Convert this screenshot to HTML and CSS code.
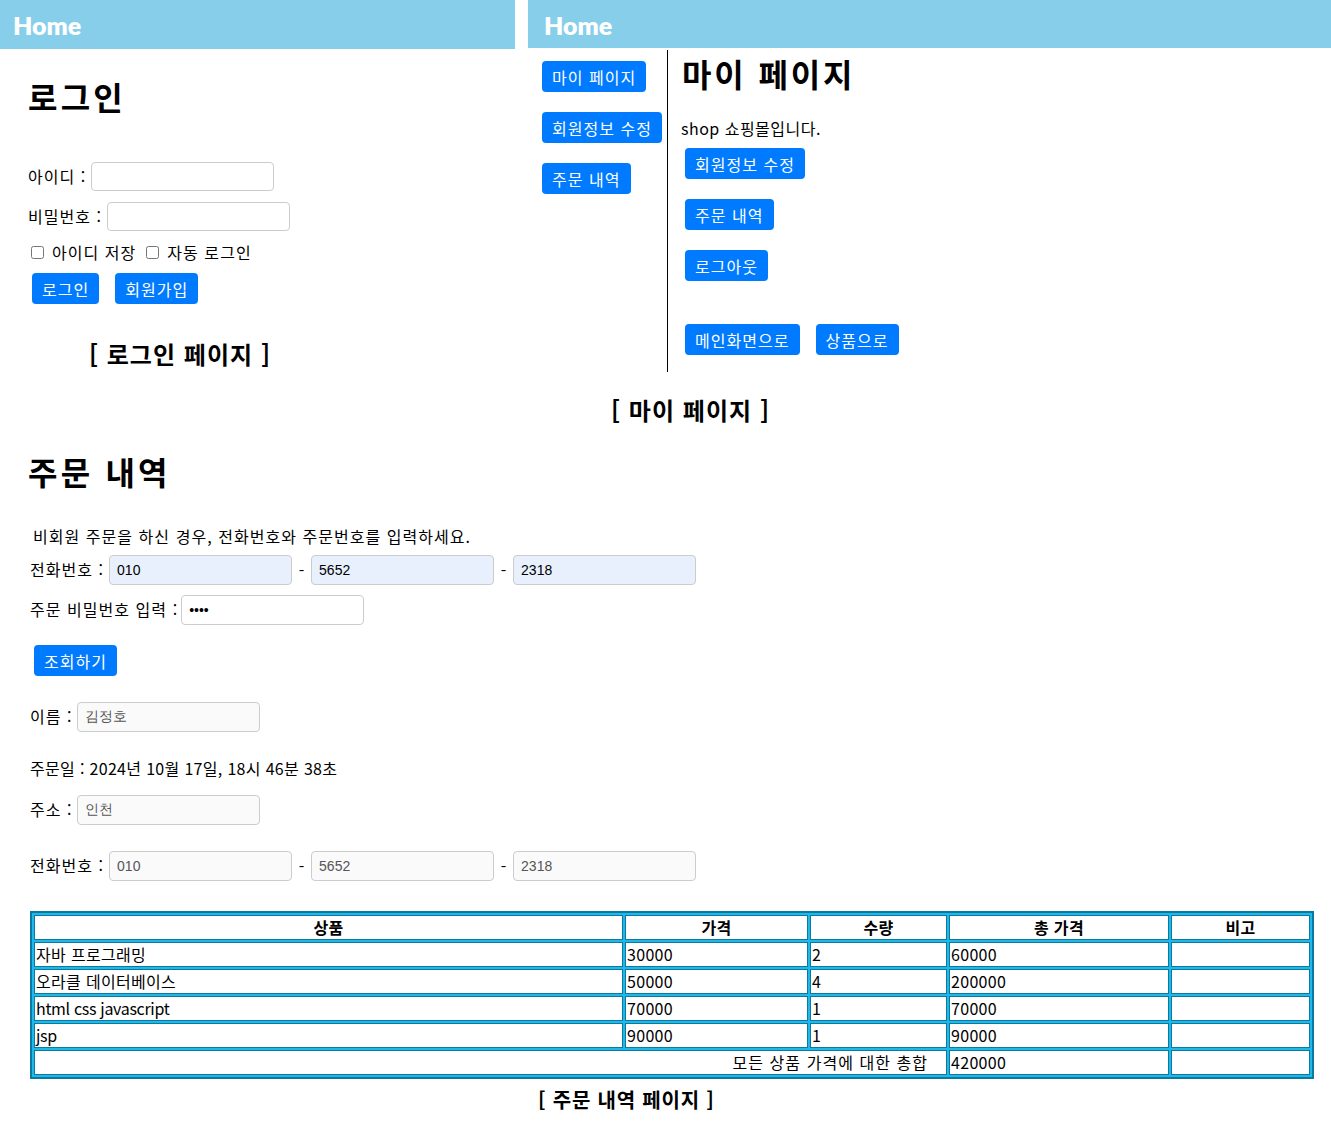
FILE: index.html
```html
<!DOCTYPE html>
<html lang="ko">
<head>
<meta charset="utf-8">
<title>Shop</title>
<link rel="stylesheet" href="styles.css">
</head>
<body>
<div class="top">
  <section class="panel-left">
    <header class="bar bar-left">Home</header>
    <div class="login">
      <h2 class="title">로그인</h2>
      <div class="frow first"><span class="lbl">아이디 :</span><input class="field login-field" type="text"></div>
      <div class="frow"><span class="lbl">비밀번호 :</span><input class="field login-field" type="password"></div>
      <div class="crow">
        <label class="chk"><input type="checkbox"> 아이디 저장</label>
        <label class="chk"><input type="checkbox"> 자동 로그인</label>
      </div>
      <div class="brow">
        <button class="btn">로그인</button>
        <button class="btn">회원가입</button>
      </div>
      <div class="caption cap-login">[ 로그인 페이지 ]</div>
    </div>
  </section>
  <section class="panel-right">
    <header class="bar bar-right">Home</header>
    <div class="mybody">
      <nav class="side">
        <button class="btn">마이 페이지</button>
        <button class="btn">회원정보 수정</button>
        <button class="btn">주문 내역</button>
      </nav>
      <div class="mycontent">
        <h1 class="title my-title">마이 페이지</h1>
        <p class="shop">shop 쇼핑몰입니다.</p>
        <div class="mybtns">
          <button class="btn">회원정보 수정</button>
          <button class="btn">주문 내역</button>
          <button class="btn">로그아웃</button>
        </div>
        <div class="navbtns">
          <button class="btn">메인화면으로</button>
          <button class="btn">상품으로</button>
        </div>
      </div>
    </div>
  </section>
</div>
<div class="caption cap-my">[ 마이 페이지 ]</div>

<section class="order">
  <h1 class="title order-title">주문 내역</h1>
  <p class="info">비회원 주문을 하신 경우, 전화번호와 주문번호를 입력하세요.</p>
  <div class="orow phone1">
    <span class="lbl">전화번호 :</span>
    <input class="field ofield auto" type="text" value="010">
    <span class="dash">-</span>
    <input class="field ofield auto" type="text" value="5652">
    <span class="dash">-</span>
    <input class="field ofield auto" type="text" value="2318">
  </div>
  <div class="orow pw">
    <span class="lbl">주문 비밀번호 입력 :</span>
    <input class="field ofield" type="password" value="1234">
  </div>
  <button class="btn search">조회하기</button>
  <div class="orow name">
    <span class="lbl">이름 :</span>
    <input class="field ofield ro" type="text" value="김정호" readonly>
  </div>
  <p class="date">주문일 : 2024년 10월 17일, 18시 46분 38초</p>
  <div class="orow addr">
    <span class="lbl">주소 :</span>
    <input class="field ofield ro" type="text" value="인천" readonly>
  </div>
  <div class="orow phone2">
    <span class="lbl">전화번호 :</span>
    <input class="field ofield ro" type="text" value="010" readonly>
    <span class="dash">-</span>
    <input class="field ofield ro" type="text" value="5652" readonly>
    <span class="dash">-</span>
    <input class="field ofield ro" type="text" value="2318" readonly>
  </div>
  <table class="otable">
    <colgroup>
      <col class="c1"><col class="c2"><col class="c3"><col class="c4"><col class="c5">
    </colgroup>
    <thead>
      <tr><th>상품</th><th>가격</th><th>수량</th><th>총 가격</th><th>비고</th></tr>
    </thead>
    <tbody>
      <tr><td>자바 프로그래밍</td><td>30000</td><td>2</td><td>60000</td><td></td></tr>
      <tr><td>오라클 데이터베이스</td><td>50000</td><td>4</td><td>200000</td><td></td></tr>
      <tr><td class="latin">html css javascript</td><td>70000</td><td>1</td><td>70000</td><td></td></tr>
      <tr><td class="latin">jsp</td><td>90000</td><td>1</td><td>90000</td><td></td></tr>
      <tr><td colspan="3" class="sum">모든 상품 가격에 대한 총합</td><td>420000</td><td></td></tr>
    </tbody>
  </table>
  <div class="caption cap-order">[ 주문 내역 페이지 ]</div>
</section>
</body>
</html>
```
FILE: styles.css
```css
* { box-sizing: border-box; }
body {
  margin: 0;
  font-family: "Noto Sans CJK KR", "Noto Sans", sans-serif;
  font-size: 16px;
  line-height: 24px;
  letter-spacing: 0.065em;
  color: #000;
  background: #fff;
}
p { margin: 0; }
.top { display: flex; gap: 13px; align-items: flex-start; }
.panel-left { width: 515px; flex: none; }
.panel-right { flex: 1; }
.bar {
  background: #87ceeb;
  color: #fff;
  font-family: "Lato", "Noto Sans", sans-serif;
  font-weight: 800;
  font-size: 25px;
  letter-spacing: 0;
  display: flex;
  align-items: center;
}
.bar-left { height: 49px; padding-left: 13px; padding-top: 1px; }
.bar-right { height: 48px; padding-left: 16px; padding-top: 1px; }
.title { font-size: 32px; line-height: 40px; font-weight: 700; margin: 0; letter-spacing: 0.1em; }
.my-title { letter-spacing: 0.09em; }
.login { padding-left: 28px; }
.login .title { margin-top: 27px; }
.frow { display: flex; align-items: center; height: 29px; margin-top: 11px; }
.frow.first { margin-top: 46px; }
.lbl { margin-right: 5px; white-space: nowrap; position: relative; top: -1px; }
.field {
  border: 1px solid #ccc;
  border-radius: 4px;
  background: #fff;
  font-family: "Liberation Sans", Arial, sans-serif;
  font-size: 14px;
  letter-spacing: 0;
  padding: 0 7px;
  outline: none;
}
.login-field { width: 183px; height: 29px; }
.crow { display: flex; align-items: center; height: 20px; margin-top: 11px; }
.chk { display: flex; align-items: center; margin-right: 7px; }
.chk input { margin: 0 8px 0 3px; width: 13px; height: 13px; }
.brow { display: flex; gap: 16px; margin-top: 11px; padding-left: 4px; }
.btn {
  background: #007bff;
  color: #fff;
  border: none;
  border-radius: 4px;
  font-family: "Noto Sans CJK KR", "Noto Sans", sans-serif;
  font-size: 16px;
  letter-spacing: 0.065em;
  line-height: 20px;
  height: 31px;
  padding: 0 10px;
  cursor: pointer;
}
.caption { font-weight: 700; font-size: 24px; line-height: 30px; }
.cap-login { margin-top: 35px; width: 304px; text-align: center; }
.mybody { display: flex; margin-top: 2px; align-items: stretch; }
.side {
  width: 140px;
  border-right: 1px solid #000;
  display: flex;
  flex-direction: column;
  align-items: flex-start;
  gap: 20px;
  padding: 11px 0 0 14px;
}
.mycontent { padding: 0 0 17px 14px; }
.my-title { margin-top: 3px; }
.shop { margin-top: 23px; margin-left: -1px; letter-spacing: 0.03em; }
.mybtns {
  display: flex;
  flex-direction: column;
  align-items: flex-start;
  gap: 20px;
  margin-top: 8px;
  padding-left: 3px;
}
.navbtns { display: flex; gap: 16px; margin-top: 43px; padding-left: 3px; }
.cap-my { margin-top: 23px; padding-left: 611px; }
.order { padding-left: 30px; }
.order-title { margin-top: 26px; margin-left: -2px; }
.info { margin-top: 33px; margin-left: 3px; }
.orow { display: flex; align-items: center; height: 30px; }
.ofield { width: 183px; height: 30px; }
.auto { background: #e8f0fe; }
.ro { background: #fafafa; color: #555; }
.dash { width: 19px; text-align: center; letter-spacing: 0; }
.phone1 { margin-top: 7px; }
.pw { margin-top: 10px; }
.pw .lbl { margin-right: 3px; }
.search { display: block; margin-top: 20px; margin-left: 4px; }
.name { margin-top: 26px; }
.name .lbl, .addr .lbl { margin-right: 4px; }
.date { margin-top: 24px; letter-spacing: 0.02em; }
.addr { margin-top: 15px; }
.phone2 { margin-top: 26px; }
.otable {
  margin-top: 30px;
  width: 1284px;
  table-layout: fixed;
  border: 2px solid #0a7aa0;
  border-spacing: 2px;
  background: #1fb8e8;
  outline: 1px solid #0a7aa0;
  outline-offset: -1px;
}
.c1 { width: 589px; }
.c2 { width: 183px; }
.c3 { width: 137px; }
.c4 { width: 220px; }
.c5 { width: 139px; }
.otable th, .otable td {
  background: #fff;
  border: 1px solid #0a7aa0;
  height: 25px;
  padding: 0 0 0 1px;
  line-height: 23px;
  font-size: 16px;
  letter-spacing: 0.02em;
  white-space: nowrap;
  overflow: hidden;
}
.otable th { font-weight: 700; text-align: center; padding: 0; }
.otable td { text-align: left; }
.otable td.latin { letter-spacing: -0.02em; }
.otable td.sum { text-align: right; padding-right: 18px; letter-spacing: 0.065em; }
.cap-order { margin-top: 8px; font-size: 20px; line-height: 26px; padding-left: 508px; letter-spacing: 0.04em; }
```
